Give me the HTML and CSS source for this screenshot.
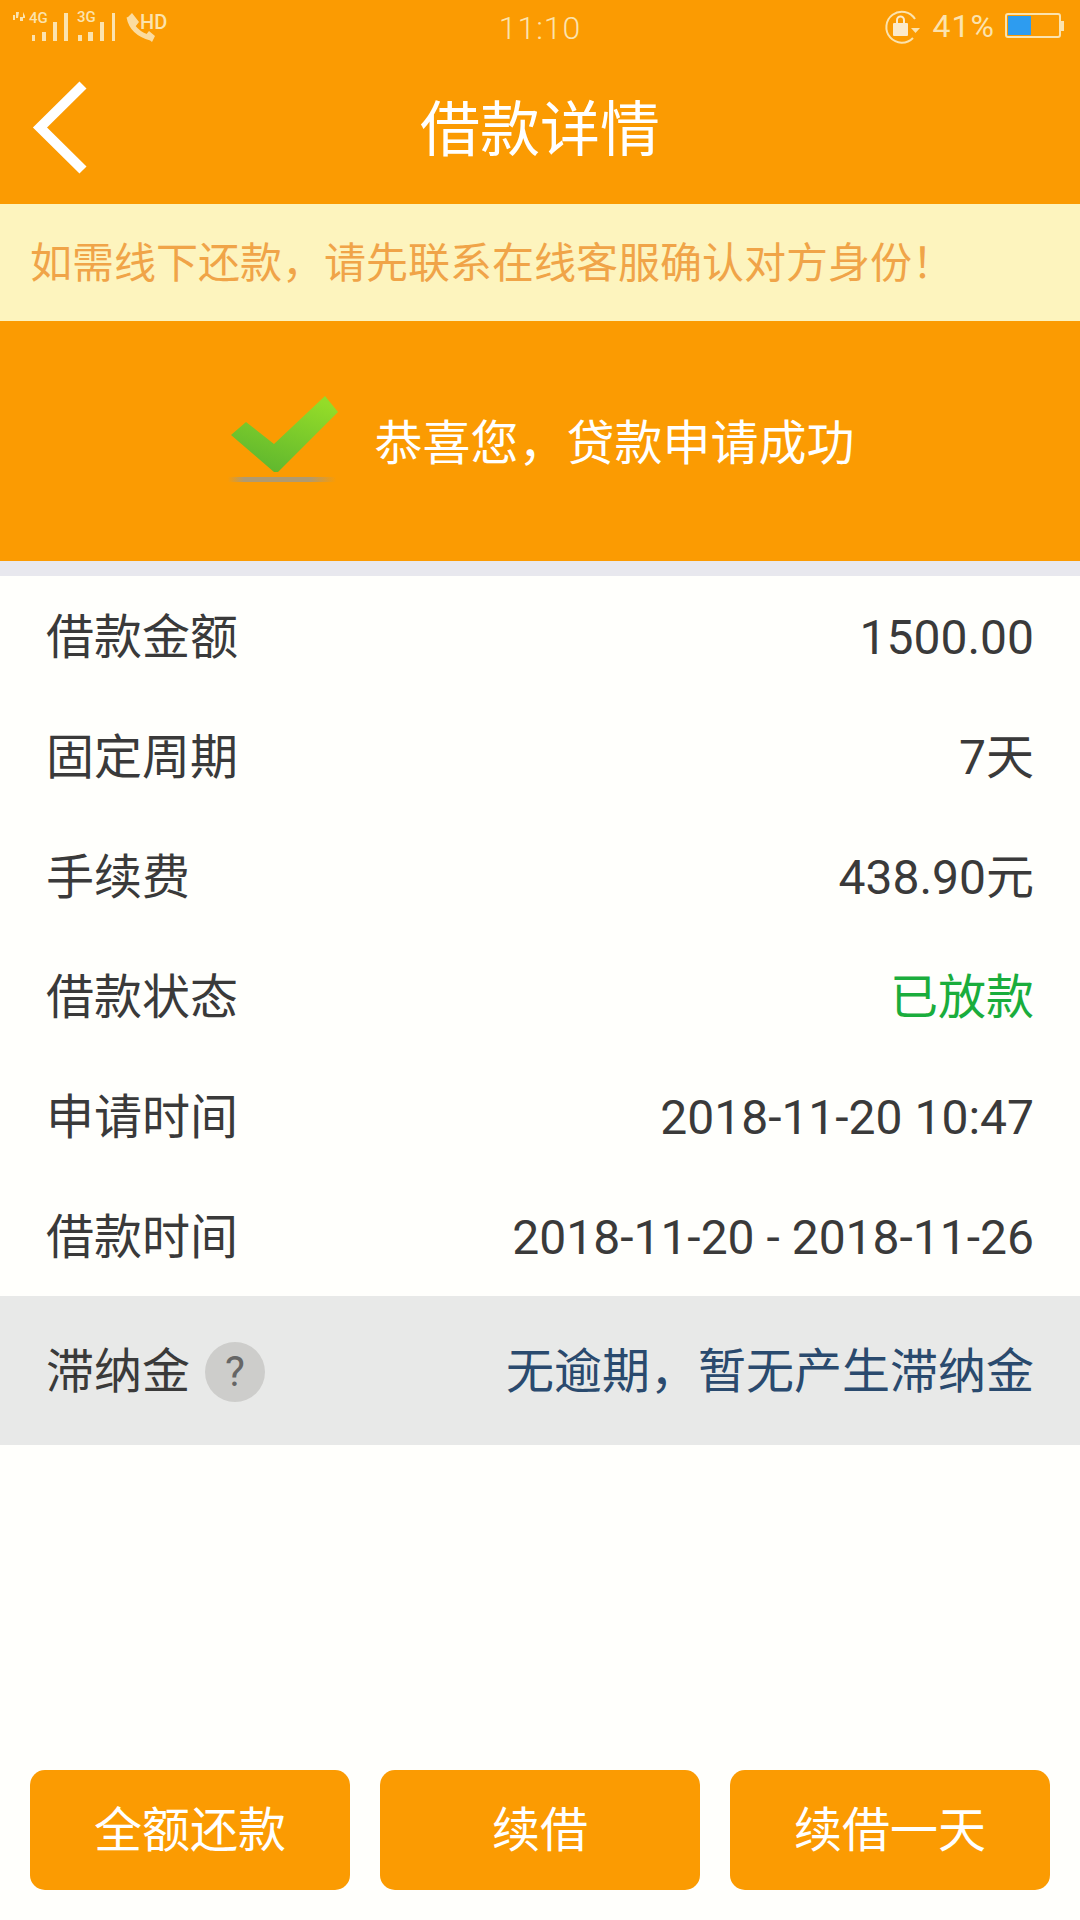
FILE: index.html
```html
<!DOCTYPE html>
<html lang="zh-CN">
<head>
    <meta charset="UTF-8">
    <meta name="viewport" content="width=device-width, initial-scale=1.0">
    <title>借款详情</title>
    <link rel="stylesheet" href="styles.css">
</head>
<body>

    <div class="top">
        <div class="status-bar">
            <div class="status-left">
                <svg class="net-icons" width="170" height="54" viewBox="0 0 170 54">
                    <g fill="#fbe3ae">
                        <path d="M13 15 h2 v5 h-2 Z M16 12 h3 l-1 6 h-2 Z M20 17 h3 v-5 l2 4 v2 h-2 v3 h-3 Z"/>
                        <rect x="32" y="35" width="3" height="6"/>
                        <rect x="42" y="32" width="4" height="9"/>
                        <rect x="53" y="22" width="4" height="19"/>
                        <rect x="64" y="13" width="4" height="28"/>
                        <rect x="78" y="35" width="4" height="6"/>
                        <rect x="88" y="32" width="5" height="9"/>
                        <rect x="100" y="22" width="4" height="19"/>
                        <rect x="112" y="13" width="3" height="28"/>
                    </g>
                    <path d="M129 17 Q132 33 151 38" fill="none" stroke="#fbdca0" stroke-width="5"/>
                    <path d="M127 18 L132 13 L139 22 L135 27 Z M145 36 L149 31 L155 36 L152 42 Z" fill="#fbdca0"/>
                </svg>
                <span class="net-label label-4g">4G</span>
                <span class="net-label label-3g">3G</span>
                <span class="net-label label-hd">HD</span>
            </div>
            <div class="clock">11:10</div>
            <div class="status-right">
                <svg width="36" height="36" viewBox="0 0 36 36">
                    <path d="M31 11 A15.5 15.5 0 1 0 29 30" fill="none" stroke="#fbe3ae" stroke-width="2"/>
                    <path d="M27 20 h9 l-4.5 5 Z" fill="#fbe3ae"/>
                    <rect x="9" y="15" width="15" height="13" rx="1" fill="#fbeacb"/>
                    <path d="M13 15 v-3 a3.5 3.5 0 0 1 7 0 v3" fill="none" stroke="#fbeacb" stroke-width="2"/>
                </svg>
                <span class="battery-text">41%</span>
                <div class="battery">
                    <div class="battery-body">
                        <div class="battery-fill"></div>
                    </div>
                    <div class="battery-tip"></div>
                </div>
            </div>
        </div>
        <div class="nav-bar">
            <svg class="back" width="60" height="96" viewBox="0 0 60 96">
                <path d="M53 5 L10 47.5 L53 90" fill="none" stroke="#fff" stroke-width="10"/>
            </svg>
            <h1>借款详情</h1>
        </div>
    </div>

    <div class="notice">如需线下还款，请先联系在线客服确认对方身份！</div>

    <div class="success">
        <svg width="112" height="96" viewBox="0 0 112 96">
            <defs>
                <linearGradient id="checkGreen" x1="0.2" y1="1" x2="0.7" y2="0">
                    <stop offset="0" stop-color="#5cb52f"/>
                    <stop offset="1" stop-color="#94dc28"/>
                </linearGradient>
                <linearGradient id="shadowLine" x1="0" y1="0" x2="1" y2="0">
                    <stop offset="0" stop-color="#b09a70" stop-opacity="0"/>
                    <stop offset="0.15" stop-color="#b09a70"/>
                    <stop offset="0.75" stop-color="#b09a70"/>
                    <stop offset="1" stop-color="#b09a70" stop-opacity="0"/>
                </linearGradient>
            </defs>
            <rect x="0" y="87" width="108" height="5" fill="url(#shadowLine)"/>
            <path d="M3 45 L18 32 L46 54 L97 6 L110 22 L50 82 L46 82 Z" fill="url(#checkGreen)"/>
        </svg>
        <span class="success-text">恭喜您，贷款申请成功</span>
    </div>

    <div class="gap"></div>

    <div class="detail-list">
        <div class="row"><span>借款金额</span><span>1500.00</span></div>
        <div class="row"><span>固定周期</span><span>7天</span></div>
        <div class="row"><span>手续费</span><span>438.90元</span></div>
        <div class="row"><span>借款状态</span><span class="green">已放款</span></div>
        <div class="row"><span>申请时间</span><span>2018-11-20 10:47</span></div>
        <div class="row"><span>借款时间</span><span>2018-11-20 - 2018-11-26</span></div>
    </div>

    <div class="row row-late">
        <span class="late-label">滞纳金<span class="help">?</span></span>
        <span class="blue">无逾期，暂无产生滞纳金</span>
    </div>

    <div class="buttons">
        <button>全额还款</button>
        <button>续借</button>
        <button>续借一天</button>
    </div>

</body>
</html>
```

FILE: styles.css
```css
* {
    box-sizing: border-box;
}
body {
    margin: 0;
    height: 1920px;
    display: flex;
    flex-direction: column;
    background-color: #fffffc;
    color: #3a3a3a;
    font-family: "Roboto", "Noto Sans CJK SC", sans-serif;
    line-height: 1.2;
    overflow: hidden;
}
.top {
    height: 204px;
    background-color: #fb9b02;
}
.status-bar {
    height: 54px;
    display: flex;
    align-items: center;
    justify-content: space-between;
    position: relative;
    color: #fbe3ae;
}
.status-left {
    width: 170px;
    height: 54px;
    position: relative;
}
.net-icons {
    display: block;
}
.net-label {
    position: absolute;
    font-size: 15px;
    line-height: 16px;
    font-weight: 500;
}
.label-4g {
    left: 29px;
    top: 10px;
}
.label-3g {
    left: 77px;
    top: 9px;
}
.label-hd {
    left: 140px;
    top: 14px;
    font-size: 20px;
}
.clock {
    position: absolute;
    left: 0;
    right: 0;
    padding-top: 2px;
    text-align: center;
    font-size: 32px;
    font-weight: 300;
    letter-spacing: 1px;
}
.status-right {
    display: flex;
    align-items: center;
    padding-right: 16px;
    margin-top: -2px;
}
.battery-text {
    font-size: 32px;
    margin-left: 13px;
    letter-spacing: 1px;
}
.battery {
    display: flex;
    align-items: center;
    margin-left: 10px;
}
.battery-body {
    width: 56px;
    height: 25px;
    border: 2px solid #fbe3ae;
    border-radius: 3px;
    padding: 1px;
}
.battery-fill {
    width: 23px;
    height: 100%;
    background-color: #2d9cf0;
}
.battery-tip {
    width: 3px;
    height: 10px;
    background-color: #fbe3ae;
}
.nav-bar {
    height: 150px;
    padding-top: 4px;
    display: flex;
    align-items: center;
    justify-content: center;
    position: relative;
}
.back {
    position: absolute;
    left: 30px;
    top: 26px;
}
h1 {
    margin: 0;
    color: #fff;
    font-size: 60px;
    font-weight: 400;
}
.notice {
    height: 117px;
    padding: 4px 0 0 30px;
    display: flex;
    align-items: center;
    background-color: #fdf4be;
    color: #f0a448;
    font-size: 42px;
}
.success {
    height: 240px;
    background-color: #fb9b02;
    color: #fff;
    font-size: 48px;
    display: flex;
    align-items: center;
    justify-content: center;
    gap: 34px;
    padding-left: 3px;
}
.success svg {
    margin-bottom: 6px;
}
.success-text {
    margin-top: 6px;
}
.gap {
    height: 15px;
    background-color: #e8e8ee;
}
.row {
    height: 120px;
    padding: 3px 46px 0;
    display: flex;
    align-items: center;
    justify-content: space-between;
    font-size: 48px;
}
.green {
    color: #1aad3c;
}
.blue {
    color: #2a4a6e;
}
.row-late {
    height: 149px;
    background-color: #e8e9e8;
}
.late-label {
    display: flex;
    align-items: center;
}
.help {
    width: 60px;
    height: 60px;
    margin-left: 15px;
    border-radius: 50%;
    background-color: #cdcdcb;
    color: #666;
    font-size: 42px;
    display: flex;
    align-items: center;
    justify-content: center;
}
.buttons {
    margin-top: auto;
    padding: 0 30px 30px;
    display: flex;
    gap: 30px;
}
button {
    flex: 1;
    height: 120px;
    padding: 2px 0 0;
    border: none;
    border-radius: 15px;
    background-color: #fb9b02;
    color: #fff;
    font-family: inherit;
    font-size: 48px;
    line-height: 1.2;
}
```
